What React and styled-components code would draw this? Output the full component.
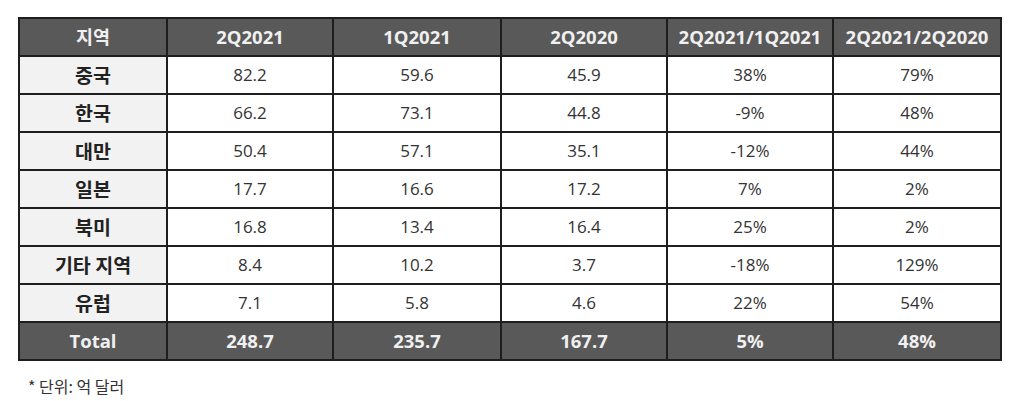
import React from 'react';
import styled, { createGlobalStyle } from 'styled-components';

const GlobalStyle = createGlobalStyle`
  body {
    margin: 0;
    background: #ffffff;
    font-family: "Open Sans", "Noto Sans CJK KR", sans-serif;
    color: #333333;
  }
`;

const columns = ['지역', '2Q2021', '1Q2021', '2Q2020', '2Q2021/1Q2021', '2Q2021/2Q2020'];
const widths = [148, 166, 168, 166, 166, 168];

const rows = [
  ['중국', '82.2', '59.6', '45.9', '38%', '79%'],
  ['한국', '66.2', '73.1', '44.8', '-9%', '48%'],
  ['대만', '50.4', '57.1', '35.1', '-12%', '44%'],
  ['일본', '17.7', '16.6', '17.2', '7%', '2%'],
  ['북미', '16.8', '13.4', '16.4', '25%', '2%'],
  ['기타 지역', '8.4', '10.2', '3.7', '-18%', '129%'],
  ['유럽', '7.1', '5.8', '4.6', '22%', '54%'],
];

const total = ['Total', '248.7', '235.7', '167.7', '5%', '48%'];

const App = () => {
  return (
    <Page>
      <GlobalStyle />
      <Table>
        <colgroup>
          {widths.map((w, i) => (
            <col key={i} style={{ width: w }} />
          ))}
        </colgroup>
        <thead>
          <tr>
            {columns.map((c) => (
              <HeadCell key={c}>{c}</HeadCell>
            ))}
          </tr>
        </thead>
        <tbody>
          {rows.map((r) => (
            <tr key={r[0]}>
              <RegionCell>{r[0]}</RegionCell>
              {r.slice(1).map((v, i) => (
                <Cell key={i}>{v}</Cell>
              ))}
            </tr>
          ))}
          <tr>
            {total.map((v, i) => (
              <HeadCell key={i}>{v}</HeadCell>
            ))}
          </tr>
        </tbody>
      </Table>
      <Note>* 단위: 억 달러</Note>
    </Page>
  );
};

export default App;

const Page = styled.div`
  padding: 17px 0 0 18px;
  width: 1004px;
`;

const Table = styled.table`
  border-collapse: collapse;
  table-layout: fixed;
  width: 982px;
  border: 2px solid #1e1e1e;
`;

const BaseCell = styled.td`
  height: 36px;
  padding: 0;
  border: 2px solid #1e1e1e;
  text-align: center;
  vertical-align: middle;
  font-size: 17px;
  line-height: 20px;
  white-space: nowrap;
`;

const HeadCell = styled(BaseCell)`
  background: #595959;
  color: #f0f0f0;
  font-weight: 700;
  font-size: 18.5px;
`;

const RegionCell = styled(BaseCell)`
  background: #f2f2f2;
  color: #222222;
  font-weight: 700;
  font-size: 19.5px;
  font-family: "Noto Sans CJK KR", sans-serif;
`;

const Cell = styled(BaseCell)`
  background: #ffffff;
  color: #333333;
`;

const Note = styled.div`
  margin: 13px 0 0 10px;
  font-size: 16px;
  color: #333333;
  font-family: "Noto Sans CJK KR", sans-serif;
`;
